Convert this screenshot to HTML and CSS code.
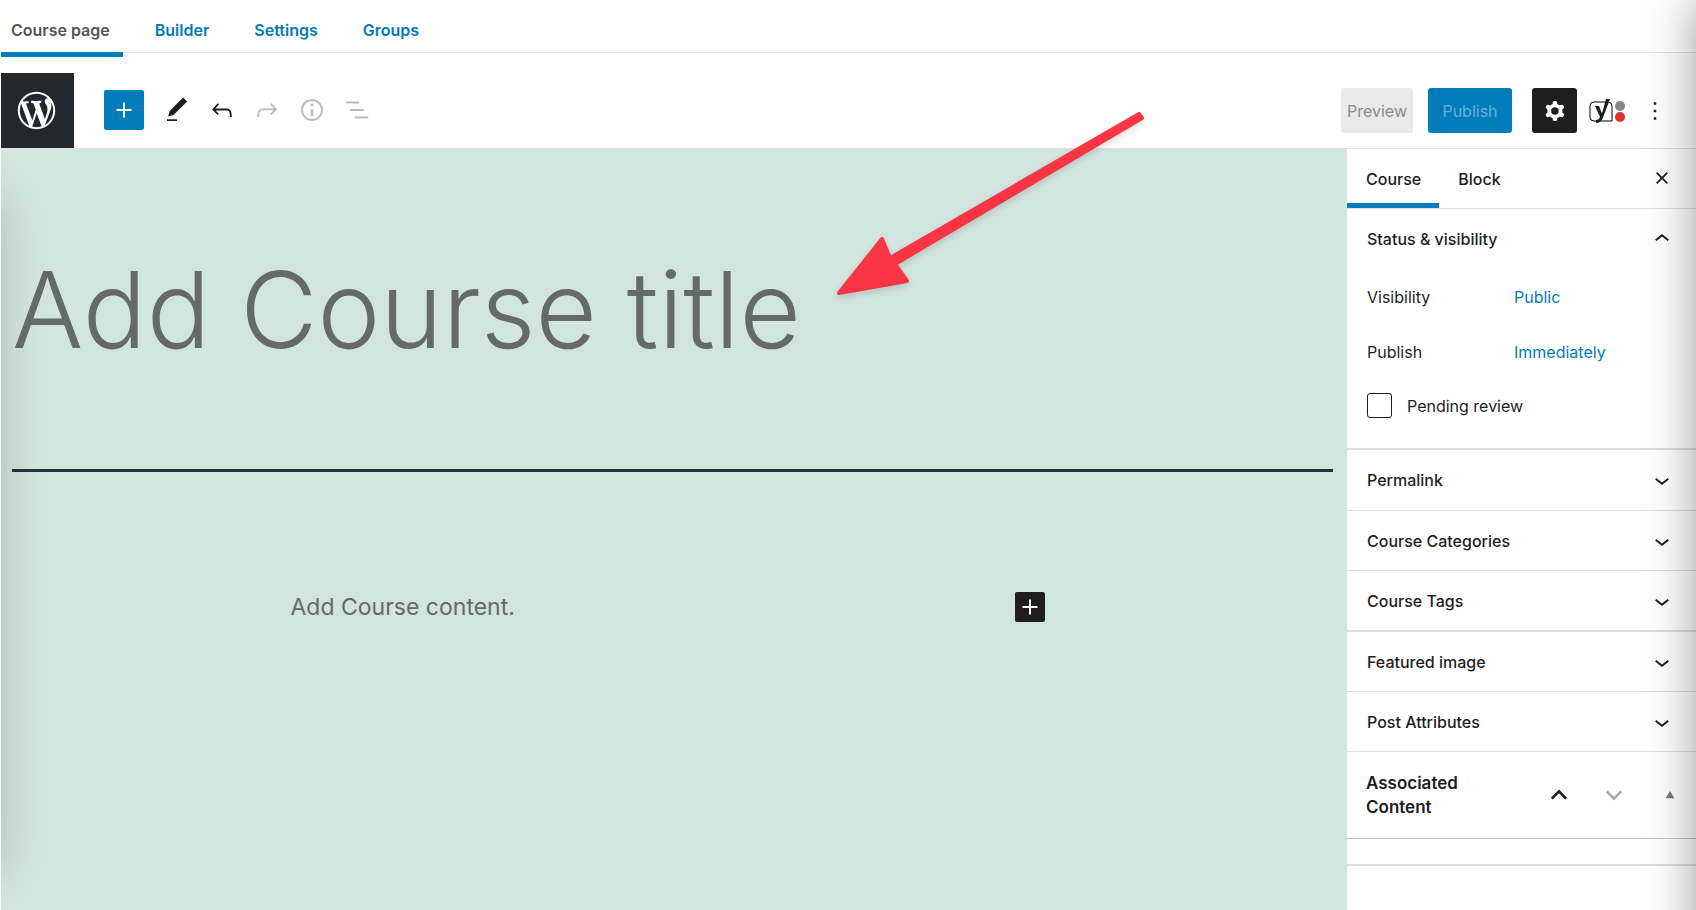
FILE: index.html
```
<!DOCTYPE html>
<html lang="en">
<head>
<meta charset="utf-8">
<meta name="viewport" content="width=device-width,initial-scale=1.0">
<title>Add Course</title>
<link rel="stylesheet" href="styles.css">
</head>
<body>
<nav class="course-tabs">
    <a href="#page" class="active">Course page</a>
    <a href="#builder">Builder</a>
    <a href="#settings">Settings</a>
    <a href="#groups">Groups</a>
</nav>

<header class="toolbar">
    <a href="#dashboard" class="wp-logo" aria-label="View courses">
        <svg viewBox="-2 -2 24 24"><path d="M20 10c0-5.51-4.49-10-10-10C4.48 0 0 4.49 0 10c0 5.52 4.48 10 10 10 5.51 0 10-4.48 10-10zM7.78 15.37L4.37 6.22c.55-.02 1.17-.08 1.17-.08.5-.06.44-1.13-.06-1.11 0 0-1.45.11-2.37.11-.18 0-.37 0-.58-.01C4.12 2.69 6.87 1.11 10 1.11c2.33 0 4.45.87 6.05 2.34-.68-.11-1.65.39-1.65 1.58 0 .74.45 1.36.9 2.1.35.61.55 1.36.55 2.46 0 1.49-1.4 5-1.4 5l-3.03-8.37c.54-.02.82-.17.82-.17.5-.05.44-1.25-.06-1.22 0 0-1.44.12-2.38.12-.87 0-2.33-.12-2.33-.12-.5-.03-.56 1.2-.06 1.22l.92.08 1.26 3.41zM17.41 10c.24-.64.74-1.87.43-4.25.7 1.29 1.05 2.71 1.05 4.25 0 3.29-1.73 6.24-4.4 7.78.97-2.59 1.94-5.2 2.92-7.78zM6.1 18.09C3.12 16.65 1.11 13.53 1.11 10c0-1.3.23-2.48.72-3.59C3.25 10.3 4.67 14.2 6.1 18.09zm4.03-6.63l2.58 6.98c-.86.29-1.76.45-2.71.45-.79 0-1.57-.11-2.29-.33.81-2.38 1.62-4.74 2.42-7.1z"/></svg>
    </a>
    <div class="tools">
        <button type="button" class="inserter" aria-label="Add block"><svg viewBox="0 0 24 24"><path d="M18 11.2h-5.2V6h-1.6v5.2H6v1.6h5.2V18h1.6v-5.2H18z"/></svg></button>
        <button type="button" class="tool" aria-label="Tools"><svg viewBox="0 0 24 24"><path d="M20.1 5.1L16.9 2 6.2 12.7l-1.3 4.4 4.5-1.3L20.1 5.1zM4 20.8h8v-1.5H4v1.5z"/></svg></button>
        <button type="button" class="tool" aria-label="Undo"><svg viewBox="0 0 24 24"><path d="M18.3 11.7c-.6-.6-1.4-.9-2.3-.9H6.7l2.9-3.3-1.1-1-4.5 5L8.5 16l1-1-2.7-2.7H16c.5 0 .9.2 1.3.5 1 1 1 3.4 1 4.5v.3h1.5v-.2c0-1.5 0-4.3-1.5-5.7z"/></svg></button>
        <button type="button" class="tool" aria-label="Redo" disabled><svg viewBox="0 0 24 24"><path d="M15.6 6.5l-1.1 1 2.9 3.3H8c-.9 0-1.7.3-2.3.9-1.4 1.5-1.4 4.2-1.4 5.6v.2h1.5v-.3c0-1.1 0-3.5 1-4.5.3-.3.7-.5 1.3-.5h9.2L14.5 15l1.1 1.1 4.6-4.6-4.6-5z"/></svg></button>
        <button type="button" class="tool" aria-label="Details" disabled><svg viewBox="0 0 24 24"><path d="M12 3.2c-4.8 0-8.8 3.9-8.8 8.8 0 4.8 3.9 8.8 8.8 8.8 4.8 0 8.8-3.9 8.8-8.8 0-4.8-4-8.8-8.8-8.8zm0 16c-4 0-7.2-3.3-7.2-7.2C4.8 8 8 4.8 12 4.8s7.2 3.3 7.2 7.2c0 4-3.2 7.2-7.2 7.2zM11 17h2v-6h-2v6zm0-8h2V7h-2v2z"/></svg></button>
        <button type="button" class="tool" aria-label="Outline" disabled><svg viewBox="0 0 24 24"><path d="M13.8 5.2H3v1.5h10.8V5.2zm-3.6 12v1.5H21v-1.5H10.2zm7.2-6H6.6v1.5h10.8v-1.5z"/></svg></button>
    </div>
    <div class="actions">
        <button type="button" class="preview" disabled>Preview</button>
        <button type="button" class="publish" disabled>Publish</button>
        <button type="button" class="cog" aria-label="Settings"><svg viewBox="0 0 24 24"><path fill-rule="evenodd" d="M10.289 4.836A1 1 0 0111.275 4h1.306a1 1 0 01.987.836l.244 1.466c.787.26 1.503.679 2.108 1.218l1.393-.522a1 1 0 011.216.437l.653 1.13a1 1 0 01-.23 1.273l-1.148.944a6.025 6.025 0 010 2.435l1.149.946a1 1 0 01.23 1.272l-.653 1.13a1 1 0 01-1.216.437l-1.394-.522c-.605.54-1.32.958-2.108 1.218l-.244 1.466a1 1 0 01-.987.836h-1.306a1 1 0 01-.986-.836l-.244-1.466a5.995 5.995 0 01-2.108-1.218l-1.394.522a1 1 0 01-1.217-.436l-.653-1.131a1 1 0 01.23-1.272l1.149-.946a6.026 6.026 0 010-2.435l-1.148-.944a1 1 0 01-.23-1.272l.653-1.131a1 1 0 011.217-.437l1.393.522a5.994 5.994 0 012.108-1.218l.244-1.466zM14.929 12a3 3 0 11-6 0 3 3 0 016 0z"/></svg></button>
        <button type="button" class="yoast" aria-label="Yoast SEO">
            <svg viewBox="0 0 36 26">
                <path d="M17 4H5Q1 4 1 8v11q0 4 4 4h18V8q0-3-3-4" fill="none" stroke="#000" stroke-width="1"/>
                <path d="M6 8h4l3 7.500L17 1h4l-7 18.500Q12 25 7 25v-3q3 0 4-3z"/>
                <circle cx="31" cy="8" r="5" fill="#888"/>
                <circle cx="31" cy="19" r="5" fill="#dc3232"/>
            </svg>
        </button>
        <button type="button" class="more" aria-label="Options"><svg viewBox="0 0 24 24"><path d="M13 19h-2v-2h2v2zm0-6h-2v-2h2v2zm0-6h-2V5h2v2z"/></svg></button>
    </div>
</header>

<div class="editor">
    <main class="canvas">
        <input type="text" class="course-title" placeholder="Add Course title" aria-label="Course title">
        <hr>
        <div class="content-row">
            <input type="text" class="course-content" placeholder="Add Course content." aria-label="Course content">
            <button type="button" class="add-block" aria-label="Add block"><svg viewBox="0 0 24 24"><path d="M18 11.2h-5.2V6h-1.6v5.2H6v1.6h5.2V18h1.6v-5.2H18z"/></svg></button>
        </div>
    </main>

    <aside class="sidebar">
        <div class="sidebar-tabs">
            <button type="button" class="active">Course</button>
            <button type="button">Block</button>
            <button type="button" class="close" aria-label="Close settings"><svg viewBox="0 0 24 24"><path d="M12 13.06l3.712 3.713 1.061-1.06L13.061 12l3.712-3.712-1.06-1.06L12 10.938 8.288 7.227l-1.061 1.06L10.939 12l-3.712 3.712 1.06 1.061L12 13.061z"/></svg></button>
        </div>

        <section class="panel-open">
            <button type="button" class="panel-toggle">Status &amp; visibility <svg viewBox="0 0 24 24"><path d="M6.5 12.4L12 8l5.5 4.4-.9 1.2L12 10l-4.5 3.6-1-1.2z"/></svg></button>
            <div class="row"><span>Visibility</span><a href="#visibility">Public</a></div>
            <div class="row"><span>Publish</span><a href="#schedule">Immediately</a></div>
            <div class="check"><input type="checkbox" id="pending"><label for="pending">Pending review</label></div>
        </section>

        <button type="button" class="panel-toggle first">Permalink <svg viewBox="0 0 24 24"><path d="M17.5 11.6L12 16l-5.5-4.4.9-1.2L12 14l4.5-3.6 1 1.2z"/></svg></button>
        <button type="button" class="panel-toggle">Course Categories <svg viewBox="0 0 24 24"><path d="M17.5 11.6L12 16l-5.5-4.4.9-1.2L12 14l4.5-3.6 1 1.2z"/></svg></button>
        <button type="button" class="panel-toggle thick">Course Tags <svg viewBox="0 0 24 24"><path d="M17.5 11.6L12 16l-5.5-4.4.9-1.2L12 14l4.5-3.6 1 1.2z"/></svg></button>
        <button type="button" class="panel-toggle">Featured image <svg viewBox="0 0 24 24"><path d="M17.5 11.6L12 16l-5.5-4.4.9-1.2L12 14l4.5-3.6 1 1.2z"/></svg></button>
        <button type="button" class="panel-toggle">Post Attributes <svg viewBox="0 0 24 24"><path d="M17.5 11.6L12 16l-5.5-4.4.9-1.2L12 14l4.5-3.6 1 1.2z"/></svg></button>

        <div class="metabox">
            <h2>Associated Content</h2>
            <button type="button" aria-label="Move up"><svg viewBox="0 0 20 20"><path d="M2 14l8-8 8 8" fill="none" stroke="#1d2327" stroke-width="3"/></svg></button>
            <button type="button" aria-label="Move down" disabled><svg viewBox="0 0 20 20"><path d="M2 6l8 8 8-8" fill="none" stroke="#a7aaad" stroke-width="3"/></svg></button>
            <button type="button" aria-label="Toggle panel"><svg viewBox="0 0 20 20"><path d="M5 13.5l5-8 5 8z" fill="#787c82"/></svg></button>
        </div>
        <div class="metabox-body"></div>
    </aside>
</div>

<!-- pointer to the title field -->
<svg class="arrow" viewBox="0 0 310 190">
    <path d="M3 186L46 132L54 151L303 7L306 11L59 157L71 174z" fill="#fa3544" stroke="#fa3544" stroke-width="4" stroke-linejoin="round"/>
</svg>
<div class="edge"></div>
</body>
</html>
```
FILE: styles.css
```
* { box-sizing: border-box; }
html { height: 100%; }
body { position: relative; margin: 0; padding-left: 1px; min-height: 100%; display: flex; flex-direction: column; background: #fff; color: #1e1e1e; font: 16px/24px Inter, "Liberation Sans", sans-serif; overflow-x: hidden; }
a { color: #007cba; text-decoration: none; }
button { margin: 0; padding: 0; border: 0; background: none; color: inherit; font: inherit; display: flex; align-items: center; justify-content: center; }
svg { display: block; fill: currentColor; flex: none; }
button svg { width: 30px; height: 30px; }

.course-tabs { display: flex; gap: 22px; height: 53px; border-bottom: 1px solid #e2e4e7; }
.course-tabs a { height: 57px; padding: 18px 13px 0 10px; font-weight: 600; }
.course-tabs .active { color: #555; border-bottom: 5px solid #007cba; }

.toolbar { display: flex; align-items: stretch; height: 76px; margin-top: 20px; border-bottom: 1px solid #e0e0e0; }
.wp-logo { display: flex; align-items: center; justify-content: center; width: 73px; padding-right: 2px; background: #23282e; color: #fff; }
.wp-logo svg { width: 45px; height: 45px; }
.tools { display: flex; align-items: center; margin-left: 30px; padding-bottom: 2px; }
.inserter { width: 40px; height: 40px; margin-right: 10px; border-radius: 2px; background: #007cba; color: #fff; }
.tool { width: 45px; height: 45px; }
.tool:disabled { color: #bbb; }
.actions { display: flex; align-items: center; margin-left: auto; padding-right: 26px; }
.preview, .publish, .cog { height: 45px; border-radius: 3px; }
.preview { width: 72px; margin-right: 15px; background: #e9e9e9; color: #8a8a8a; }
.publish { width: 84px; margin-right: 20px; background: #007cba; color: #66b0d6; }
.cog { width: 45px; background: #1e1e1e; color: #fff; }
.yoast { margin: 0 15px 0 12px; }
.yoast svg { width: 36px; height: 26px; }

.editor { display: flex; flex: 1; }
.canvas { position: relative; overflow: hidden; flex: 1; min-width: 0; padding: 80px 13px 0 11px; background: #d1e4dd; }
.canvas::before { content: ""; position: absolute; left: -60px; top: 50px; bottom: 40px; width: 60px; box-shadow: 0 0 45px #0000002b; }
.canvas input { display: block; padding: 0; border: 0; background: none; font-family: inherit; color: #28303d; }
.canvas input::placeholder { color: #646a68; opacity: 1; }
.course-title { position: relative; width: 100%; height: 160px; font-size: 106px; font-weight: 300; }
hr { height: 3px; margin: 80px 0 120px; border: 0; background: #28303d; }
.content-row { display: flex; align-items: center; width: 764px; max-width: 100%; margin: 0 auto; padding-right: 10px; }
.canvas .course-content { flex: 1; height: 30px; font-size: 23px; }
.add-block { width: 30px; height: 30px; border-radius: 2px; background: #1e1e1e; color: #fff; }

.sidebar { width: 350px; border-left: 1px solid #e0e0e0; background: #fff; }
.sidebar-tabs { display: flex; height: 60px; border-bottom: 1px solid #ddd; font-weight: 500; }
.sidebar-tabs button { padding: 0 18px 0 19px; border-top: 5px solid transparent; border-bottom: 5px solid transparent; }
.sidebar-tabs .active { border-bottom-color: #007cba; }
.sidebar-tabs .close { margin-left: auto; padding: 0 19px 2px; }
.panel-toggle { justify-content: space-between; width: 100%; height: 60px; padding: 0 19px 0 20px; border-bottom: 1px solid #ddd; font-weight: 500; }
.panel-toggle.first, .panel-toggle.thick { height: 61px; }
.panel-toggle.thick { border-bottom-width: 2px; }
.panel-open { height: 241px; border-bottom: 2px solid #ddd; }
.panel-open .panel-toggle { border-bottom: 0; }
.row { display: flex; height: 55px; padding: 16px 20px 0; }
.row span { width: 147px; }
.check { display: flex; align-items: center; gap: 15px; padding: 14px 20px; }
.check input { appearance: none; width: 25px; height: 25px; margin: 0; border: 1px solid #1e1e1e; border-radius: 3px; }
.metabox { display: flex; align-items: center; height: 87px; padding: 0 12px 0 19px; border-bottom: 1px solid #c3c4c7; }
.metabox h2 { width: 110px; margin: 0 auto 0 0; font-size: 17px; line-height: 24px; font-weight: 600; }
.metabox button { width: 55px; height: 40px; }
.metabox button:last-child { width: 28px; margin-left: 15px; }
.metabox svg { width: 18px; height: 18px; }
.metabox-body { height: 27px; border-bottom: 2px solid #ddd; }

.arrow { position: absolute; left: 836px; top: 107px; width: 310px; height: 190px; overflow: visible; filter: drop-shadow(0 3px 3px #0002); pointer-events: none; }

/* soft shadow along the right edge of the window */
.edge { position: absolute; right: 0; top: 0; bottom: 0; width: 60px; overflow: hidden; pointer-events: none; }
.edge::after { content: ""; position: absolute; left: 100%; top: 0; bottom: -60px; width: 60px; box-shadow: 0 0 50px #0006; }
```
